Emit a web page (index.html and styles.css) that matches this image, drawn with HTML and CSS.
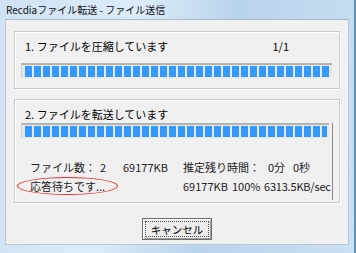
FILE: index.html
```html
<!DOCTYPE html>
<html>
<head>
	<meta charset="UTF-8">
	<title>Recdiaファイル転送 - ファイル送信</title>
	<link rel="stylesheet" href="styles.css">
</head>
<body>
	<div class="window">
		<div class="titlebar">Recdiaファイル転送 - ファイル送信</div>
		<div class="client">
			<div class="group g1">
				<div class="head"><span>1. ファイルを圧縮しています</span><span class="count">1/1</span></div>
				<div class="bar b1"><div class="fill"></div></div>
			</div>
			<div class="group g2">
				<div class="head"><span>2. ファイルを転送しています</span></div>
				<div class="panel">
					<div class="bar b2"><div class="fill"></div></div>
					<div class="stats">
						<div class="row r1">
							<span class="c-label">ファイル数：</span><span class="c-num">2</span><span class="c-size">69177KB</span>
							<span class="c-right">推定残り時間：</span><span class="c-min">0分</span><span>0秒</span>
						</div>
						<div class="row r2">
							<span class="c-wait">応答待ちです...<span class="ring"></span></span>
							<span class="c-right">69177KB</span><span class="c-pct">100%</span><span class="c-rate">6313.5KB/sec</span>
						</div>
					</div>
				</div>
			</div>
			<div class="actions"><button class="btn"><span>キャンセル</span></button></div>
		</div>
	</div>
</body>
</html>
```

FILE: styles.css
```css
html, body { margin: 0; padding: 0; }
body { width: 356px; height: 253px; overflow: hidden; font-family: "Noto Sans CJK JP", "Liberation Sans", sans-serif; font-size: 11px; color: #000; }
.window { width: 356px; height: 253px; box-sizing: border-box; background: linear-gradient(100deg, #cfe2f3 0%, #dcebf8 35%, #b9d4ed 60%, #cae0f3 100%); border-right: 2px solid #5e8fb0; display: flex; flex-direction: column; }
.titlebar { height: 19px; line-height: 20px; padding-left: 6px; font-size: 10px; color: #111; white-space: nowrap; }
.client { margin: 0 5px; height: 226px; background: #f0f0f0; border: 1px solid #b8c8d8; border-top-color: #a6b9cc; box-sizing: border-box; display: flex; flex-direction: column; }
.group { margin: 11px 8px 0 8px; box-sizing: border-box; border: 1px solid #cacaca; box-shadow: inset 1px 1px 0 #fff, 1px 1px 0 #fff; }
.g1 { height: 58px; }
.g2 { height: 104px; margin-top: 10px; }
.head { height: 28px; line-height: 28px; padding-left: 10px; display: flex; white-space: nowrap; }
.count { margin-left: auto; margin-right: 50px; }
.bar { height: 15px; box-sizing: border-box; margin-left: 6px; background: #e8e8e8; border-top: 2px solid #b4b4b4; border-left: 1px solid #d0d0d0; padding: 1px 2px 1px 3px; }
.b1 { width: 311px; margin-top: 3px; }
.b2 { width: 308px; margin-top: -5px; }
.fill { height: 100%; background: repeating-linear-gradient(90deg, #3399ff 0 7px, transparent 7px 9px); }
.panel { margin-right: 6px; border-right: 1px solid #888; height: 77px; }
.stats { padding: 20px 0 0 15px; }
.row { display: flex; height: 19px; line-height: 19px; white-space: nowrap; color: #222; }
.c-label { width: 70px; }
.c-num { width: 23px; }
.c-size { width: 60px; }
.r1 .c-right { width: 85px; }
.c-min { width: 25px; }
.r2 .c-right { width: 49px; }
.c-pct { width: 32px; }
.c-rate { letter-spacing: -0.2px; }
.c-wait { width: 153px; position: relative; }
.ring { position: absolute; left: -13px; top: 0; width: 99px; height: 16px; border: 1.5px solid #e8322e; border-radius: 50%; }
.actions { display: flex; justify-content: center; padding-top: 15px; }
.btn { width: 70px; height: 22px; padding: 2px; font: inherit; font-size: 10.5px; color: #000; background: #ececec; border: 1px solid #6e6e6e; box-shadow: inset 1px 1px 0 #fff, inset -1px -1px 0 #a0a0a0; }
.btn span { display: block; height: 100%; line-height: 15px; border: 1px dotted #555; box-sizing: border-box; }
```
